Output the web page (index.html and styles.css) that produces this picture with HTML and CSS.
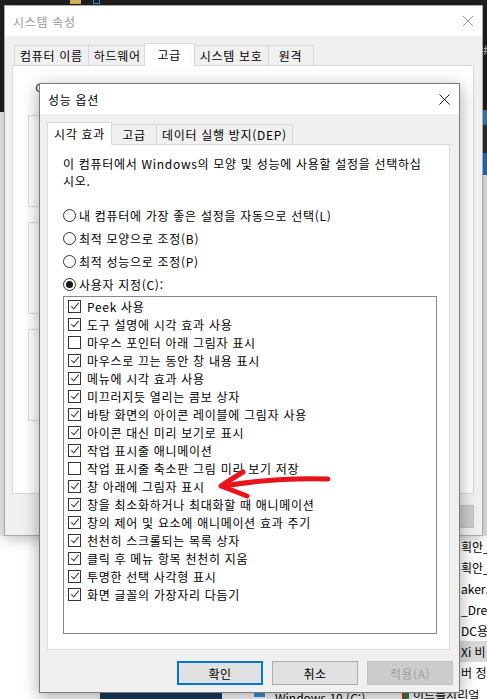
FILE: index.html
```html
<!DOCTYPE html>
<html lang="ko">
<head>
  <meta charset="UTF-8">
  <title>성능 옵션</title>
  <link rel="stylesheet" href="styles.css">
</head>
<body>
  <div class="desktop">
    <!-- background: dark editor strip + explorer window -->
    <div class="bg-top">
      <span class="bg-folder"></span>
      <span class="bg-square"></span>
    </div>
    <div class="bg-left"></div>
    <div class="bg-right">
      <span class="bg-hash">#</span>
      <div class="band band-a"></div>
      <div class="band band-b"></div>
      <div class="band band-c"></div>
    </div>

    <div class="file-list">
      <div class="file-row">획안_</div>
      <div class="file-row">획안_</div>
      <div class="file-row">aker.u</div>
      <div class="file-row">_Drea</div>
      <div class="file-row">DC용</div>
      <div class="file-row selected">Xi 비</div>
      <div class="file-row">버 정</div>
    </div>
    <div class="file-last"><span class="file-icon"></span>이드를시리얼</div>
    <div class="nav-selected"></div>
    <div class="drive"><span class="drive-icon"></span>Windows 10 (C:)</div>

    <!-- System properties (inactive) -->
    <div class="window sysprops">
      <div class="titlebar">
        <span class="title">시스템 속성</span>
        <svg class="close" width="10" height="10" viewBox="0 0 10 10"><path d="M0 0L10 10M10 0L0 10" stroke="#9a9a9a" stroke-width="1"/></svg>
      </div>
      <div class="win-body">
        <div class="tabs">
          <div class="tab">컴퓨터 이름</div>
          <div class="tab">하드웨어</div>
          <div class="tab active">고급</div>
          <div class="tab">시스템 보호</div>
          <div class="tab">원격</div>
        </div>
        <div class="tab-panel sys-panel">
          <p class="sys-note">이</p>
          <div class="group"></div>
          <div class="group"></div>
          <div class="group"></div>
        </div>
        <div class="buttons sys-buttons">
          <button class="btn"></button>
          <button class="btn"></button>
          <button class="btn disabled"></button>
        </div>
      </div>
    </div>

    <!-- Performance options (active) -->
    <div class="window perf">
      <div class="titlebar">
        <span class="title">성능 옵션</span>
        <svg class="close" width="11" height="11" viewBox="0 0 11 11"><path d="M0.5 0.5L10.5 10.5M10.5 0.5L0.5 10.5" stroke="#111" stroke-width="1"/></svg>
      </div>
      <div class="win-body">
        <div class="tabs">
          <div class="tab active first">시각 효과</div>
          <div class="tab">고급</div>
          <div class="tab">데이터 실행 방지(DEP)</div>
        </div>
        <div class="tab-panel perf-panel">
          <p class="desc">이 컴퓨터에서 Windows의 모양 및 성능에 사용할 설정을 선택하십<br>시오.</p>

          <div class="radios">
            <label class="radio-row"><span class="radio"></span>내 컴퓨터에 가장 좋은 설정을 자동으로 선택(L)</label>
            <label class="radio-row"><span class="radio"></span>최적 모양으로 조정(B)</label>
            <label class="radio-row"><span class="radio"></span>최적 성능으로 조정(P)</label>
            <label class="radio-row"><span class="radio on"></span>사용자 지정(C):</label>
          </div>

          <div class="list">
            <div class="item"><span class="cb on"></span>Peek 사용</div>
            <div class="item"><span class="cb on"></span>도구 설명에 시각 효과 사용</div>
            <div class="item"><span class="cb"></span>마우스 포인터 아래 그림자 표시</div>
            <div class="item"><span class="cb on"></span>마우스로 끄는 동안 창 내용 표시</div>
            <div class="item"><span class="cb on"></span>메뉴에 시각 효과 사용</div>
            <div class="item"><span class="cb on"></span>미끄러지듯 열리는 콤보 상자</div>
            <div class="item"><span class="cb on"></span>바탕 화면의 아이콘 레이블에 그림자 사용</div>
            <div class="item"><span class="cb on"></span>아이콘 대신 미리 보기로 표시</div>
            <div class="item"><span class="cb on"></span>작업 표시줄 애니메이션</div>
            <div class="item"><span class="cb"></span>작업 표시줄 축소판 그림 미리 보기 저장</div>
            <div class="item"><span class="cb on"></span>창 아래에 그림자 표시</div>
            <div class="item"><span class="cb on"></span>창을 최소화하거나 최대화할 때 애니메이션</div>
            <div class="item"><span class="cb on"></span>창의 제어 및 요소에 애니메이션 효과 주기</div>
            <div class="item"><span class="cb on"></span>천천히 스크롤되는 목록 상자</div>
            <div class="item"><span class="cb on"></span>클릭 후 메뉴 항목 천천히 지움</div>
            <div class="item"><span class="cb on"></span>투명한 선택 사각형 표시</div>
            <div class="item"><span class="cb on"></span>화면 글꼴의 가장자리 다듬기</div>
          </div>
        </div>
        <div class="buttons perf-buttons">
          <button class="btn default">확인</button>
          <button class="btn">취소</button>
          <button class="btn disabled">적용(A)</button>
        </div>
      </div>
    </div>

    <!-- hand drawn annotation -->
    <svg class="arrow" width="487" height="699" viewBox="0 0 487 699">
      <path d="M328 479 Q280 477 223 486" fill="none" stroke="#e8141c" stroke-width="5" stroke-linecap="round"/>
      <path d="M243 472 Q230 480 221 486 Q234 491 247 496" fill="none" stroke="#e8141c" stroke-width="5" stroke-linecap="round" stroke-linejoin="round"/>
    </svg>
  </div>
</body>
</html>
```

FILE: styles.css
```css
* {
  box-sizing: border-box;
}

body {
  margin: 0;
  font-family: "Noto Sans CJK KR", "Noto Sans", sans-serif;
  font-size: 12px;
  letter-spacing: 0.7px;
  color: #000;
  background: #fff;
}

.desktop {
  position: relative;
  width: 487px;
  height: 699px;
  overflow: hidden;
  background: #fff;
}

/* ---------- background bits ---------- */

.bg-top {
  position: absolute;
  left: 0;
  top: 0;
  width: 487px;
  height: 6px;
  background: #1f1f1f;
}

.bg-folder {
  position: absolute;
  left: 70px;
  top: 0;
  width: 11px;
  height: 4px;
  background: #d9b85a;
}

.bg-square {
  position: absolute;
  left: 93px;
  top: 0;
  width: 7px;
  height: 4px;
  border: 1px solid #3b8ed8;
  border-top: none;
}

.bg-left {
  position: absolute;
  left: 0;
  top: 0;
  width: 4px;
  height: 536px;
  background: linear-gradient(#1f1f1f 0, #1f1f1f 112px, #ececec 112px);
}

.bg-right {
  position: absolute;
  left: 482px;
  top: 0;
  width: 5px;
  height: 536px;
  background: linear-gradient(#1f1f1f 0, #1f1f1f 175px, #e4e4e4 175px);
  overflow: hidden;
}

.bg-hash {
  position: absolute;
  left: 1px;
  top: 40px;
  color: #c8c8c8;
  font-size: 13px;
}

.band {
  position: absolute;
  left: 0;
  width: 5px;
}

.band-a { top: 110px; height: 15px; background: #3a78b4; }
.band-b { top: 125px; height: 28px; background: #2c2c2c; }
.band-c { top: 153px; height: 22px; background: #1e6fc0; }

.file-list {
  position: absolute;
  left: 459px;
  top: 536px;
  width: 28px;
}

.file-row {
  height: 21px;
  line-height: 21px;
  padding-left: 2px;
  white-space: nowrap;
  letter-spacing: 0;
}

.file-row.selected {
  background: #d9d9d9;
}

.file-last {
  position: absolute;
  left: 402px;
  top: 684px;
  display: flex;
  align-items: center;
  gap: 4px;
  height: 21px;
  white-space: nowrap;
  letter-spacing: 0;
}

.file-icon {
  width: 7px;
  height: 9px;
  background: #2e8b3a;
  border-left: 2px solid #c0392b;
}

.nav-selected {
  position: absolute;
  left: 100px;
  top: 692px;
  width: 122px;
  height: 7px;
  background: #1c3a5e;
}

.drive {
  position: absolute;
  left: 254px;
  top: 689px;
  display: flex;
  align-items: center;
  gap: 10px;
  height: 17px;
  white-space: nowrap;
  letter-spacing: 0;
}

.drive-icon {
  width: 11px;
  height: 9px;
  border-top: 4px solid #3c8fde;
  border-bottom: 3px solid #9a9a9a;
}

/* ---------- windows ---------- */

.window {
  position: absolute;
  background: #f0f0f0;
  display: flex;
  flex-direction: column;
}

.titlebar {
  height: 30px;
  background: #fff;
  display: flex;
  align-items: center;
  justify-content: space-between;
  flex: none;
}

.win-body {
  flex: 1;
  display: flex;
  flex-direction: column;
}

.tabs {
  display: flex;
  align-items: flex-end;
  height: 22px;
  padding-left: 2px;
}

.tab {
  height: 20px;
  min-width: 46px;
  padding: 0 5px;
  border: 1px solid #d9d9d9;
  border-bottom: none;
  margin-right: -1px;
  display: flex;
  align-items: center;
  justify-content: center;
  white-space: nowrap;
  background: #f0f0f0;
}

.tab.active {
  position: relative;
  z-index: 1;
  height: 23px;
  min-width: 51px;
  margin: 0 -1px -1px -2px;
  padding: 0 6px 2px;
  background: #fff;
}

.tab-panel {
  background: #fff;
  border: 1px solid #d9d9d9;
}

.buttons {
  display: flex;
  justify-content: flex-end;
}

.btn {
  font-family: inherit;
  font-size: 12px;
  letter-spacing: 0.5px;
  color: #000;
  background: #e1e1e1;
  border: 1px solid #adadad;
  padding: 0;
}

.btn.default {
  border: 2px solid #0078d7;
}

.btn.disabled {
  background: #cccccc;
  border-color: #bfbfbf;
  color: #9d9d9d;
}

/* ---------- system properties ---------- */

.sysprops {
  left: 4px;
  top: 5px;
  width: 479px;
  height: 531px;
  border: 1px solid #aaaaaa;
  box-shadow: 0 3px 12px rgba(0, 0, 0, 0.25);
}

.sysprops .titlebar {
  padding: 0 9px 0 8px;
  color: #999;
}

.sysprops .win-body {
  padding: 7px 8px 0 7px;
}

.sys-panel {
  height: 429px;
  padding: 14px 15px 0 15px;
}

.sys-note {
  margin: 0 0 18px 7px;
  line-height: 17px;
  white-space: nowrap;
}

.group {
  height: 92px;
  border: 1px solid #dcdcdc;
  margin-bottom: 15px;
}

.sys-buttons {
  margin-top: 11px;
  gap: 6px;
}

.sys-buttons .btn {
  width: 75px;
  height: 23px;
}

/* ---------- performance options ---------- */

.perf {
  left: 39px;
  top: 83px;
  width: 421px;
  height: 610px;
  border: 1px solid #7a7a7a;
  box-shadow: 0 4px 16px rgba(0, 0, 0, 0.35);
  z-index: 2;
}

.perf .titlebar {
  padding: 0 9px 0 8px;
}

.perf .win-body {
  padding: 8px 0 0 7px;
}

.perf .tab.first {
  margin-left: -2px;
}

.perf-panel {
  width: 403px;
  height: 506px;
  padding: 10px 15px 0 15px;
}

.desc {
  margin: 0;
  line-height: 17px;
  white-space: nowrap;
}

.radios {
  display: flex;
  flex-direction: column;
  gap: 5px;
  margin-top: 17px;
}

.radio-row {
  display: flex;
  align-items: center;
  gap: 3px;
  height: 18px;
  white-space: nowrap;
}

.radio {
  width: 13px;
  height: 13px;
  border: 1px solid #333;
  border-radius: 50%;
  background: #fff;
  display: flex;
  align-items: center;
  justify-content: center;
  flex: none;
}

.radio.on::after {
  content: "";
  width: 7px;
  height: 7px;
  border-radius: 50%;
  background: #1a1a1a;
}

.list {
  margin-top: 3px;
  width: 374px;
  height: 338px;
  border: 1px solid #828790;
}

.item {
  display: flex;
  align-items: center;
  gap: 6px;
  height: 18px;
  padding-left: 4px;
  white-space: nowrap;
}

.cb {
  position: relative;
  width: 13px;
  height: 13px;
  border: 1px solid #333;
  background: #fff;
  flex: none;
}

.cb.on::after {
  content: "";
  position: absolute;
  left: 3.5px;
  top: 0.5px;
  width: 3px;
  height: 7px;
  border: solid #333;
  border-width: 0 1.3px 1.3px 0;
  transform: rotate(40deg);
}

.perf-buttons {
  margin-top: 11px;
  gap: 9px;
  padding-right: 6px;
}

.perf-buttons .btn {
  width: 86px;
  height: 24px;
}

.arrow {
  position: absolute;
  left: 0;
  top: 0;
  z-index: 3;
  pointer-events: none;
}
```
